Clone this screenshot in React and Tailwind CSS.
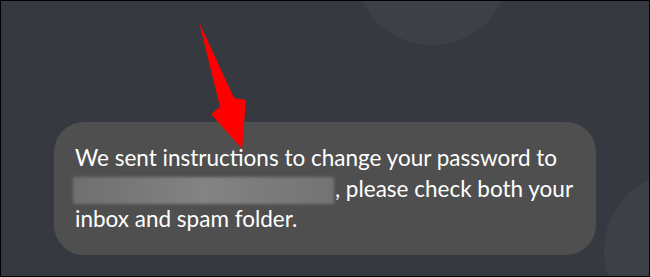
import React from 'react';

const App = () => {
  return (
    <div className="w-[650px] h-[277px] relative overflow-hidden border border-black bg-[#36393f] box-border">
      {/* decorative background circles */}
      <div className="absolute left-[353px] top-[-112px] w-[156px] h-[156px] rounded-full bg-[#3d4047]" />
      <div className="absolute left-[603px] top-[171px] w-[158px] h-[158px] rounded-full bg-[#3d4047]" />

      <div className="relative pt-[121px] pl-[53px]">
        <div className="w-[542px] h-[133px] rounded-[30px] bg-[#4f4f4f] pl-[21px] pt-[21px]">
          <p className="text-white text-[22.5px] leading-[30.5px] font-['Lato',sans-serif]">
            We sent instructions to change your password to
            <br />
            <span className="inline-block align-middle w-[261px] h-[27px] ml-[-2px] mr-[1px] bg-gradient-to-r from-[#6f6f6f] via-[#838383] to-[#737373] blur-[1.5px]" />
            , please check both your
            <br />
            inbox and spam folder.
          </p>
        </div>
      </div>

      {/* red arrow */}
      <svg className="absolute left-0 top-0" width="650" height="277" viewBox="0 0 650 277">
        <polygon points="198,21 233,97 245,99 241,148 210,113 219,106" fill="#ff0000" />
      </svg>
    </div>
  );
};

export default App;
